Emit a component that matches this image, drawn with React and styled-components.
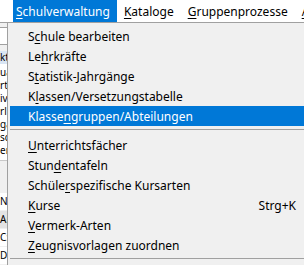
import styled, { createGlobalStyle } from "styled-components";

const GlobalStyle = createGlobalStyle`
  html, body {
    margin: 0;
    padding: 0;
    overflow: hidden;
  }
  body {
    font-family: "Noto Sans", "Open Sans", sans-serif;
    font-size: 12px;
    color: #000;
    background: #f0f0f0;
  }
`;

const Screen = styled.div`
  position: relative;
  width: 304px;
  height: 265px;
  overflow: hidden;
  background: #f0f0f0;
`;

const MenuBar = styled.div`
  display: flex;
  height: 22px;
  padding-left: 13px;
  background: #ffffff;
  border-bottom: 1px solid #a0a0a0;
  white-space: nowrap;
`;

const BarItem = styled.div`
  display: flex;
  align-items: center;
  padding: 0 ${(p) => (p.$active ? "7px 0 3px" : "7px")};
  background: ${(p) => (p.$active ? "#0078d7" : "transparent")};
  color: ${(p) => (p.$active ? "#ffffff" : "#000000")};
  height: ${(p) => (p.$active ? "23px" : "22px")};
`;

const Key = styled.span`
  text-decoration: underline;
  text-underline-offset: 2px;
`;

const Behind = styled.div`
  display: flex;
  flex-direction: column;
  width: 7px;
  overflow: hidden;
  padding-top: 4px;
  font-size: 10px;
  line-height: 13px;
  white-space: nowrap;
`;

const Field = styled.div`
  height: 16px;
  width: 20px;
  margin-left: -14px;
  border: 1px solid #a0a0a0;
  background: #ffffff;
`;

const TabLabel = styled.div`
  margin-top: 6px;
  height: 13px;
  background: #d9e5f3;
`;

const ListBox = styled.div`
  background: #ffffff;
  padding: 2px 0 3px;
  border-bottom: 1px solid #c8c8c8;
  display: flex;
  flex-direction: column;
`;

const Grid = styled.div`
  margin-top: 32px;
  display: flex;
  flex-direction: column;
`;

const GridRow = styled.div`
  height: 17px;
  line-height: 17px;
  background: ${(p) => (p.$gray ? "#e3e3e3" : "#ffffff")};
  border-bottom: 1px solid #f0f0f0;
`;

const Dropdown = styled.div`
  position: absolute;
  left: 7px;
  top: 22px;
  width: 300px;
  padding: 3px 2px 2px;
  background: #f0f0f0;
  border: 1px solid #a0a0a0;
  white-space: nowrap;
`;

const Item = styled.div`
  display: flex;
  align-items: center;
  height: 20px;
  padding: 0 14px 0 18px;
  background: ${(p) => (p.$hot ? "#0078d7" : "transparent")};
  color: ${(p) => (p.$hot ? "#ffffff" : "#000000")};
`;

const Label = styled.span`
  flex: 1;
`;

const Separator = styled.div`
  height: 9px;
  display: flex;
  flex-direction: column;
  &::before {
    content: "";
    margin-top: 3px;
    height: 1px;
    background: #a0a0a0;
  }
`;

const accel = (text, index) => (
  <>
    {text.slice(0, index)}
    <Key>{text[index]}</Key>
    {text.slice(index + 1)}
  </>
);

const groups = [
  [
    ["Schule bearbeiten", 1],
    ["Lehrkräfte", 2],
    ["Statistik-Jahrgänge", 1],
    ["Klassen/Versetzungstabelle", 1],
    ["Klassengruppen/Abteilungen", 6, null, true],
  ],
  [
    ["Unterrichtsfächer", 0],
    ["Stundentafeln", 4],
    ["Schülerspezifische Kursarten", 6],
    ["Kurse", 0, "Strg+K"],
    ["Vermerk-Arten", 0],
    ["Zeugnisvorlagen zuordnen", 0],
  ],
];

export default function App() {
  return (
    <Screen>
      <GlobalStyle />
      <MenuBar>
        <BarItem $active>{accel("Schulverwaltung", 0)}</BarItem>
        <BarItem>{accel("Kataloge", 0)}</BarItem>
        <BarItem>{accel("Gruppenprozesse", 0)}</BarItem>
        <BarItem>{accel("Auswertungen", 0)}</BarItem>
      </MenuBar>
      <Behind>
        <Field />
        <TabLabel>kt</TabLabel>
        <ListBox>
          <div>ua</div>
          <div>rt</div>
          <div>iv</div>
          <div>rl</div>
          <div>ga</div>
          <div>sc</div>
          <div>er</div>
        </ListBox>
        <Grid>
          <GridRow>Na</GridRow>
          <GridRow $gray>Ar</GridRow>
          <GridRow>C:</GridRow>
          <GridRow>Di</GridRow>
        </Grid>
      </Behind>
      <Dropdown>
        {groups.map((group, g) => (
          <div key={g}>
            {group.map(([text, idx, shortcut, hot]) => (
              <Item key={text} $hot={hot}>
                <Label>{accel(text, idx)}</Label>
                {shortcut && <span>{shortcut}</span>}
              </Item>
            ))}
            <Separator />
          </div>
        ))}
      </Dropdown>
    </Screen>
  );
}
